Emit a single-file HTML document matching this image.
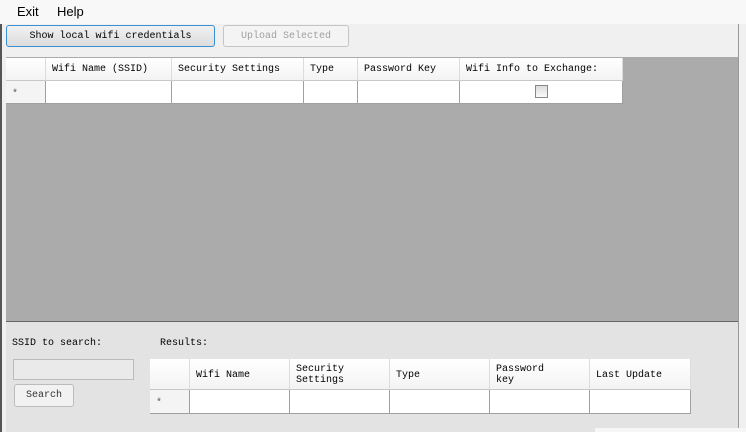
<!DOCTYPE html>
<html><head><style>
*{margin:0;padding:0;box-sizing:border-box}
body{width:746px;height:432px;overflow:hidden;background:#f0f0f0;position:relative;font-family:"Liberation Mono",monospace;font-size:10px;color:#000}
.a{position:absolute}
.menu{left:0;top:0;width:746px;height:24px;background:#f8f8f8;font-family:"Liberation Sans",sans-serif;font-size:13px}
.btn{border:1px solid #aaa;border-radius:3px;text-align:center;line-height:21px}
.cell{position:absolute;border-right:1px solid #a0a0a0;border-bottom:1px solid #a0a0a0;background:#fff;padding-left:6px}
.hd{background:linear-gradient(#fff,#f3f3f3);border-bottom-color:#c8c8c8;border-right-color:#dcdcdc}
</style></head><body>
<div class="a" style="left:0;top:0;width:2px;height:432px;background:#555"></div>
<div class="a menu"><span class="a" style="left:17px;top:4px">Exit</span><span class="a" style="left:57px;top:4px">Help</span></div>
<div class="a btn" style="left:6px;top:25px;width:209px;height:22px;background:linear-gradient(#f2f2f2,#dcdcdc);border-color:#3c8fd0">Show local wifi credentials</div>
<div class="a btn" style="left:223px;top:25px;width:126px;height:22px;background:#f4f4f4;color:#a0a0a0;border-color:#c4c4c4">Upload Selected</div>
<div class="a" style="left:6px;top:57px;width:732px;height:264px;background:#ababab"></div>
<div class="cell hd" style="left:6px;top:58px;width:40px;height:23px"></div>
<div class="cell hd" style="left:46px;top:58px;width:126px;height:23px;line-height:24px">Wifi Name (SSID)</div>
<div class="cell hd" style="left:172px;top:58px;width:132px;height:23px;line-height:24px">Security Settings</div>
<div class="cell hd" style="left:304px;top:58px;width:54px;height:23px;line-height:24px">Type</div>
<div class="cell hd" style="left:358px;top:58px;width:102px;height:23px;line-height:24px">Password Key</div>
<div class="cell hd" style="left:460px;top:58px;width:163px;height:23px;line-height:24px">Wifi Info to Exchange:</div>
<div class="cell" style="left:6px;top:81px;width:40px;height:23px;background:#f4f4f4;line-height:27px;color:#555">*</div>
<div class="cell" style="left:46px;top:81px;width:126px;height:23px"></div>
<div class="cell" style="left:172px;top:81px;width:132px;height:23px"></div>
<div class="cell" style="left:304px;top:81px;width:54px;height:23px"></div>
<div class="cell" style="left:358px;top:81px;width:102px;height:23px"></div>
<div class="cell" style="left:460px;top:81px;width:163px;height:23px"><div class="a" style="left:75px;top:4px;width:13px;height:13px;border:1px solid #888;background:linear-gradient(#ddd,#fafafa)"></div></div>
<div class="a" style="left:6px;top:321px;width:732px;height:111px;background:#e3e3e3;border-top:1px solid #666"></div>
<div class="a" style="left:738px;top:24px;width:1px;height:408px;background:#999"></div>
<div class="a" style="left:12px;top:338px">SSID to search:</div>
<div class="a" style="left:160px;top:338px">Results:</div>
<div class="a" style="left:13px;top:359px;width:121px;height:21px;border:1px solid #bbb;background:#eaeaea"></div>
<div class="a btn" style="left:14px;top:384px;width:60px;height:23px;background:#f2f2f2;border-color:#bbb;line-height:22px;color:#333">Search</div>
<div class="cell hd" style="left:150px;top:359px;width:40px;height:31px"></div>
<div class="cell hd" style="left:190px;top:359px;width:100px;height:31px;line-height:33px">Wifi Name</div>
<div class="cell hd" style="left:290px;top:359px;width:100px;height:31px;line-height:11px;padding-top:5px">Security<br>Settings</div>
<div class="cell hd" style="left:390px;top:359px;width:100px;height:31px;line-height:33px">Type</div>
<div class="cell hd" style="left:490px;top:359px;width:100px;height:31px;line-height:11px;padding-top:5px">Password<br>key</div>
<div class="cell hd" style="left:590px;top:359px;width:101px;height:31px;line-height:33px">Last Update</div>
<div class="cell" style="left:150px;top:390px;width:40px;height:24px;background:#f4f4f4;line-height:28px;color:#555">*</div>
<div class="cell" style="left:190px;top:390px;width:100px;height:24px"></div>
<div class="cell" style="left:290px;top:390px;width:100px;height:24px"></div>
<div class="cell" style="left:390px;top:390px;width:100px;height:24px"></div>
<div class="cell" style="left:490px;top:390px;width:100px;height:24px"></div>
<div class="cell" style="left:590px;top:390px;width:101px;height:24px"></div>
<div class="a" style="left:595px;top:428px;width:151px;height:4px;background:#f6f6f6"></div>
</body></html>
